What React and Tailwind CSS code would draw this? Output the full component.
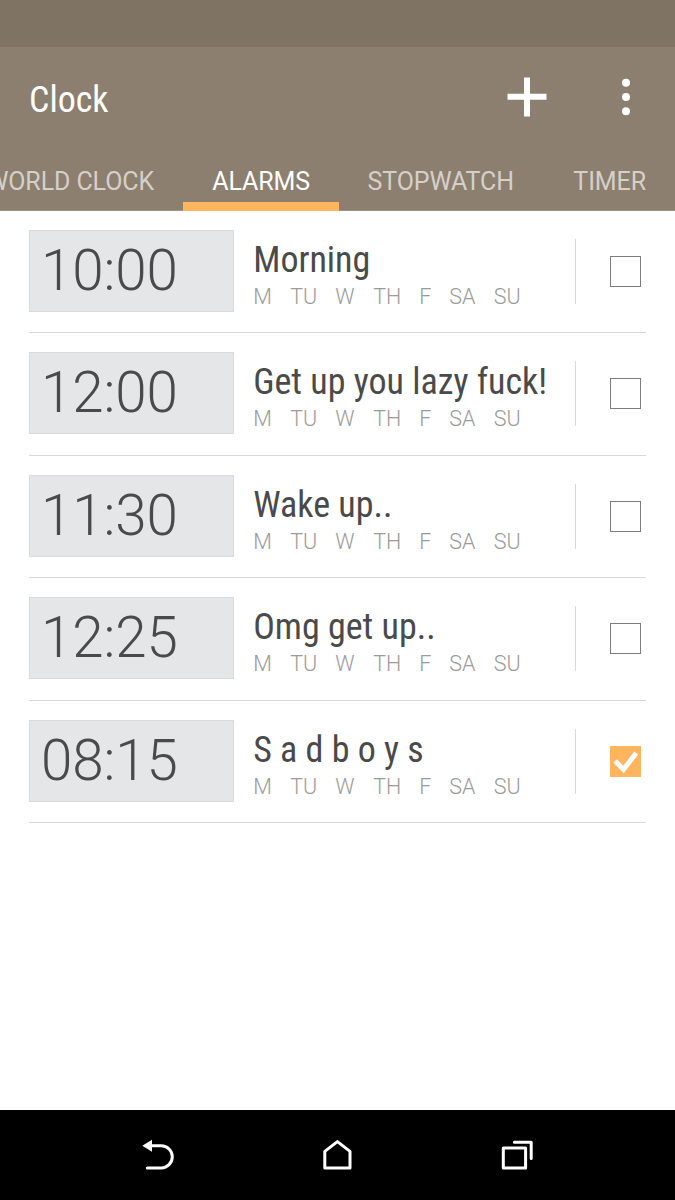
import React, { useState } from "react";

const TABS = [
  { id: "world", label: "WORLD CLOCK", width: "w-[215px]" },
  { id: "alarms", label: "ALARMS", width: "w-[156px]" },
  { id: "stopwatch", label: "STOPWATCH", width: "w-[204px]" },
  { id: "timer", label: "TIMER", width: "w-[132px]" },
];

const DAYS = [
  { name: "M", width: "w-[37px]" },
  { name: "TU", width: "w-[45px]" },
  { name: "W", width: "w-[38px]" },
  { name: "TH", width: "w-[46px]" },
  { name: "F", width: "w-[30px]" },
  { name: "SA", width: "w-[44.5px]" },
  { name: "SU", width: "w-[30px]" },
];

const ALARMS = [
  { id: 1, time: "10:00", label: "Morning", on: false },
  { id: 2, time: "12:00", label: "Get up you lazy fuck!", on: false },
  { id: 3, time: "11:30", label: "Wake up..", on: false },
  { id: 4, time: "12:25", label: "Omg get up..", on: false },
  { id: 5, time: "08:15", label: "S a d b o y s", on: true },
];

function Checkbox({ checked, onClick }) {
  return (
    <button
      onClick={onClick}
      className={
        checked
          ? "w-[31px] h-[31px] bg-[#ffb55e]"
          : "w-[31px] h-[31px] border border-[#7c7c7c] bg-white"
      }
    >
      {checked && (
        <svg viewBox="0 0 31 31" className="block w-[31px] h-[31px]" fill="none" stroke="#fff" strokeWidth="5">
          <path d="M5.2 15l8.3 8.5L26.2 7" />
        </svg>
      )}
    </button>
  );
}

function AlarmRow({ alarm, onToggle }) {
  return (
    <div className="flex h-[122.5px] mx-[29px] pt-[19px] border-b border-[#d8d8d8]">
      <div className="w-[205px] h-[82px] shrink-0 bg-[#e5e6e8] border border-[#d9dadb] pl-[11px] text-[56.5px] leading-[80px] font-light tracking-[-0.1px]">
        {alarm.time}
      </div>
      <div className="flex-1 pl-[19.2px] pt-[9px]">
        <p className="text-[36px] leading-[42px] whitespace-nowrap [font-stretch:75%]">{alarm.label}</p>
        <div className="flex pt-[3px] text-[21.5px] leading-[26px] font-light text-[#9b9b9b]">
          {DAYS.map((d) => (
            <span key={d.name} className={d.width}>{d.name}</span>
          ))}
        </div>
      </div>
      <div className="flex items-center w-[71px] h-[65px] mt-[9px] pl-[34px] border-l border-[#d8d8d8]">
        <Checkbox checked={alarm.on} onClick={onToggle} />
      </div>
    </div>
  );
}

export default function App() {
  const [tab, setTab] = useState("alarms");
  const [alarms, setAlarms] = useState(ALARMS);

  const toggle = (id) =>
    setAlarms(alarms.map((a) => (a.id === id ? { ...a, on: !a.on } : a)));

  return (
    <div className="flex flex-col w-[675px] h-[1200px] overflow-hidden bg-white text-[#4a4a4a] font-['Roboto',sans-serif]">
      {/* Status bar */}
      <div className="h-[47px] shrink-0 bg-[#7f7364]" />

      {/* Header */}
      <header className="flex flex-col h-[164px] shrink-0 bg-[#8c7f6f] border-b border-[#9d9488] text-white">
        <div className="flex items-center h-[104px] pl-[29px] pr-[44.5px]">
          <h1 className="flex-1 pt-[2px] text-[36px] leading-[44px] [font-stretch:75%]">Clock</h1>
          <svg viewBox="0 0 40 40" className="w-[40px] h-[40px] mr-[73.5px] mb-[2.4px]" fill="#fff">
            <path d="M17 .5h6v16.3h16.5v6H23v16.7h-6V22.8H.5v-6H17z" />
          </svg>
          <svg viewBox="0 0 10 38" className="w-[10px] h-[38px] mb-[2.4px]" fill="#fff">
            <circle cx="5" cy="4.7" r="4" />
            <circle cx="5" cy="19" r="4" />
            <circle cx="5" cy="33.3" r="4" />
          </svg>
        </div>
        <nav className="flex justify-end h-[60px]">
          {TABS.map((t) => (
            <button
              key={t.id}
              onClick={() => setTab(t.id)}
              className={`${t.width} shrink-0 flex flex-col justify-end text-[25px] leading-[30px] tracking-[-0.1px] whitespace-nowrap ${t.id === tab ? "text-white" : "text-[#d5d0ca]"}`}
            >
              <span className="w-full pr-[29px] pb-[5px] text-right">{t.label}</span>
              <span className={t.id === tab ? "w-full h-[9px] -mb-px bg-[#ffb55e]" : "w-full h-[9px] -mb-px"} />
            </button>
          ))}
        </nav>
      </header>

      {/* Alarm list */}
      <main className="flex-1 -mt-[0.5px]">
        {alarms.map((a) => (
          <AlarmRow key={a.id} alarm={a} onToggle={() => toggle(a.id)} />
        ))}
      </main>

      {/* Navigation keys */}
      <footer className="flex justify-between items-center h-[90px] shrink-0 px-[140px] bg-black">
        <svg viewBox="0 0 36 36" className="w-[36px] h-[36px]" fill="none" stroke="#fff" strokeWidth="3">
          <path d="M10 8.7h11.2a11.1 11.1 0 0 1 0 22.2H7.3" strokeLinecap="round" />
          <path d="M2.3 8.7l9.7-6v12z" fill="#fff" stroke="none" />
        </svg>
        <svg viewBox="0 0 36 36" className="w-[36px] h-[36px]" fill="none" stroke="#fff" strokeWidth="3" strokeLinejoin="round">
          <path d="M4.8 30.9V14.4L17.4 4.6l12.6 9.8v16.5z" />
        </svg>
        <svg viewBox="0 0 36 36" className="w-[36px] h-[36px]" fill="none" stroke="#fff" strokeWidth="3" strokeLinecap="round" strokeLinejoin="round">
          <path d="M4.3 10.9h22.3v20.1H4.3z" />
          <path d="M15.3 5.2h16.9v16.3" />
        </svg>
      </footer>
    </div>
  );
}
